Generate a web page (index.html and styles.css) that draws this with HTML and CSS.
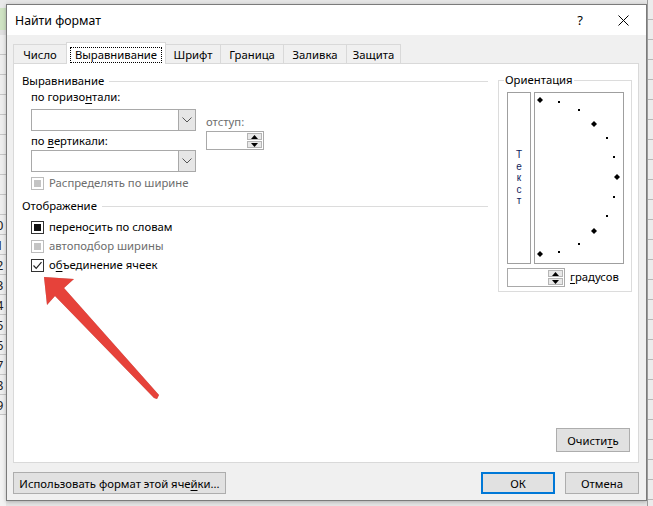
FILE: index.html
```html
<!DOCTYPE html>
<html lang="ru">
<head>
<meta charset="utf-8">
<title>Найти формат</title>
<link rel="stylesheet" href="styles.css">
</head>
<body>
<div class="screen">
  <div class="xl-left">
    <div class="xl-icon"></div>
    <div class="xl-rows">
      <div class="xl-row"></div><div class="xl-row"></div><div class="xl-row"></div><div class="xl-row"></div><div class="xl-row"></div><div class="xl-row"></div><div class="xl-row"></div><div class="xl-row"></div><div class="xl-row"></div><div class="xl-row">10</div><div class="xl-row">11</div><div class="xl-row">12</div><div class="xl-row">13</div><div class="xl-row">14</div><div class="xl-row">15</div><div class="xl-row">16</div><div class="xl-row">17</div><div class="xl-row">18</div><div class="xl-row">19</div>
    </div>
  </div>

  <div class="dialog">
    <div class="titlebar">
      <span class="title">Найти формат</span>
      <span class="help">?</span>
      <svg class="close" width="11" height="11" viewBox="0 0 11 11"><path d="M0.5 0.5 L10.5 10.5 M10.5 0.5 L0.5 10.5" stroke="#000" stroke-width="1" fill="none"/></svg>
    </div>

    <div class="dbody">
      <div class="tabs">
        <div class="tab t1">Число</div>
        <div class="tab sel"><span class="focus">Выравнивание</span></div>
        <div class="tab t3">Шрифт</div>
        <div class="tab t4">Граница</div>
        <div class="tab t5">Заливка</div>
        <div class="tab t6">Защита</div>
      </div>

      <div class="panel">
        <div class="panel-top">
          <div class="leftcol">
            <div class="sec-head"><span>Выравнивание</span><span class="line"></span></div>
            <div class="indent">
              <div class="align-grid">
                <div class="col-a">
                  <div class="lbl">по горизо<u>н</u>тали:</div>
                  <div class="combo"><span class="combo-field"></span><span class="combo-btn"><svg width="10" height="6" viewBox="0 0 10 6"><path d="M0.5 0.5 L5 5 L9.5 0.5" stroke="#555" fill="none"/></svg></span></div>
                  <div class="lbl lbl2">по <u>в</u>ертикали:</div>
                  <div class="combo combo2"><span class="combo-field"></span><span class="combo-btn"><svg width="10" height="6" viewBox="0 0 10 6"><path d="M0.5 0.5 L5 5 L9.5 0.5" stroke="#555" fill="none"/></svg></span></div>
                </div>
                <div class="col-b">
                  <div class="lbl dis">отступ:</div>
                  <div class="spin">
                    <span class="spin-field"></span>
                    <span class="spin-btns">
                      <span class="sb"><svg width="7" height="4" viewBox="0 0 7 4"><path d="M0 4 L3.5 0 L7 4 Z" fill="#000"/></svg></span>
                      <span class="sb"><svg width="7" height="4" viewBox="0 0 7 4"><path d="M0 0 L3.5 4 L7 0 Z" fill="#000"/></svg></span>
                    </span>
                  </div>
                </div>
              </div>
              <div class="cb-row first-cb dis"><span class="cb cb-dis"><span class="cb-fill"></span></span>Распределять по ширине</div>
            </div>

            <div class="sec-head sec2"><span>Отображение</span><span class="line"></span></div>
            <div class="indent">
              <div class="cb-row cb-a"><span class="cb cb-ind"><span class="cb-fill"></span></span>перено<u>с</u>ить по словам</div>
              <div class="cb-row dis"><span class="cb cb-dis"><span class="cb-fill"></span></span>автоподбор ширины</div>
              <div class="cb-row"><span class="cb cb-chk"><svg width="11" height="11" viewBox="0 0 11 11"><path d="M1.5 5.5 L4.2 8.3 L9.5 2.2" stroke="#222" stroke-width="1.2" fill="none"/></svg></span>о<u>б</u>ъединение ячеек</div>
            </div>
          </div>

          <fieldset class="orient">
            <legend>Ориентация</legend>
            <div class="orient-main">
              <div class="vtext"><span>Т</span><span>е</span><span>к</span><span>с</span><span>т</span></div>
              <div class="dial">
                <svg width="88" height="170" viewBox="0 0 88 170">
                  <g fill="#000">
                    <path d="M5 4 L8 7 L5 10 L2 7 Z"/>
                    <path d="M59 28 L62 31 L59 34 L56 31 Z"/>
                    <path d="M82 81 L85 84 L82 87 L79 84 Z"/>
                    <path d="M59 135 L62 138 L59 141 L56 138 Z"/>
                    <path d="M5 158 L8 161 L5 164 L2 161 Z"/>
                    <rect x="23" y="8" width="2" height="2"/>
                    <rect x="43" y="16" width="2" height="2"/>
                    <rect x="71" y="44" width="2" height="2"/>
                    <rect x="78" y="63" width="2" height="2"/>
                    <rect x="78" y="103" width="2" height="2"/>
                    <rect x="71" y="122" width="2" height="2"/>
                    <rect x="43" y="150" width="2" height="2"/>
                    <rect x="23" y="158" width="2" height="2"/>
                  </g>
                </svg>
              </div>
            </div>
            <div class="deg-row">
              <div class="spin spin-deg">
                <span class="spin-field"></span>
                <span class="spin-btns">
                  <span class="sb"><svg width="7" height="4" viewBox="0 0 7 4"><path d="M0 4 L3.5 0 L7 4 Z" fill="#000"/></svg></span>
                  <span class="sb"><svg width="7" height="4" viewBox="0 0 7 4"><path d="M0 0 L3.5 4 L7 0 Z" fill="#000"/></svg></span>
                </span>
              </div>
              <span class="deg-lbl"><u>г</u>радусов</span>
            </div>
          </fieldset>
        </div>

        <div class="panel-foot">
          <div class="btn btn-clear">Очисти<u>т</u>ь</div>
        </div>
      </div>

      <div class="dfoot">
        <div class="btn btn-use">Использовать формат этой яче<u>й</u>ки...</div>
        <div class="spacer"></div>
        <div class="btn btn-ok">ОК</div>
        <div class="btn btn-cancel">Отмена</div>
      </div>
    </div>
  </div>

  <div class="xl-right"></div>

  <svg class="arrow" width="653" height="506" viewBox="0 0 653 506">
    <polygon points="44,277 74,279 64,288 159,395 157,399 154,398 55,296 47,305" fill="#e6423a"/>
  </svg>
</div>
</body>
</html>
```

FILE: styles.css
```css
html, body {
  margin: 0;
  padding: 0;
}

body {
  width: 653px;
  height: 506px;
  overflow: hidden;
  background: #e6e6e6;
  font-family: "Noto Sans", "Open Sans", sans-serif;
  font-size: 11.3px;
  color: #000;
}

u {
  text-decoration: underline;
  text-underline-offset: 2px;
}

.screen {
  display: flex;
  height: 506px;
  position: relative;
}

/* Excel background strips */
.xl-left {
  width: 6px;
  flex: none;
  overflow: hidden;
  background: #f3f3f3;
  display: flex;
  flex-direction: column;
}

.xl-icon {
  height: 35px;
  flex: none;
  background: linear-gradient(#e9e9e9 0 8px, #cfe3c3 8px 30px, #e0e0e0 30px);
}

.xl-rows {
  margin-left: -14px;
  width: 20px;
}

.xl-row {
  height: 20px;
  box-sizing: border-box;
  border-bottom: 1px solid #c6c6c6;
  text-align: center;
  line-height: 20px;
  font-size: 13px;
  color: #222;
  background: #eeeeee;
}

.xl-right {
  flex: 1;
  background: repeating-linear-gradient(#ececec 0 19px, #b8b8b8 19px 20px);
  border-left: 1px solid #9a9a9a;
}

/* Dialog */
.dialog {
  width: 641px;
  height: 497px;
  margin-top: 4px;
  flex: none;
  box-sizing: border-box;
  border: 1px solid #7b7b7b;
  background: #f0f0f0;
  display: flex;
  flex-direction: column;
  box-shadow: 0 1px 4px rgba(0, 0, 0, 0.25);
}

.titlebar {
  height: 30px;
  flex: none;
  background: #fff;
  display: flex;
  align-items: center;
  padding-left: 8px;
  padding-right: 17px;
}

.title {
  flex: 1;
  font-size: 12.3px;
}

.help {
  font-size: 13px;
  margin-right: 35px;
}

.dbody {
  flex: 1;
  display: flex;
  flex-direction: column;
  padding: 7px 7px 6px 6px;
}

/* Tabs */
.tabs {
  display: flex;
  align-items: flex-end;
  height: 21px;
  position: relative;
  z-index: 1;
}

.tab {
  height: 19px;
  box-sizing: border-box;
  border: 1px solid #d9d9d9;
  border-bottom: none;
  margin-left: -1px;
  background: #f0f0f0;
  display: flex;
  align-items: center;
  justify-content: center;
  white-space: nowrap;
}

.tab:first-child {
  margin-left: 0;
}

.t1 { width: 54px; }
.t3 { width: 56px; }
.t4 { width: 64px; }
.t5 { width: 64px; }
.t6 { width: 55px; }

.tab.sel {
  width: 100px;
  height: 22px;
  margin-bottom: -1px;
  background: #fff;
  align-items: flex-start;
  padding-top: 5px;
}

.focus {
  outline: 1px dotted #000;
  outline-offset: 0;
  padding: 0 4px;
  line-height: 14px;
}

/* Panel */
.panel {
  height: 400px;
  flex: none;
  box-sizing: border-box;
  border: 1px solid #d9d9d9;
  background: #fff;
  display: flex;
  flex-direction: column;
}

.panel-top {
  display: flex;
  padding: 10px 6px 0 8px;
}

.leftcol {
  width: 466px;
  flex: none;
}

.sec-head {
  display: flex;
  align-items: center;
  height: 14px;
  line-height: 14px;
}

.sec-head .line {
  flex: 1;
  height: 1px;
  background: #dcdcdc;
  margin-left: 5px;
}

.sec2 {
  margin-top: 9px;
}

.indent {
  padding-left: 9px;
}

.align-grid {
  display: flex;
  margin-top: 2px;
}

.col-a {
  width: 165px;
}

.col-b {
  margin-left: 10px;
  padding-top: 25px;
}

.lbl {
  line-height: 14px;
  height: 14px;
  white-space: nowrap;
}

.lbl2 {
  margin-top: 3px;
}

.dis {
  color: #6d6d6d;
}

.combo {
  margin-top: 5px;
  height: 22px;
  box-sizing: border-box;
  border: 1px solid #a9a9a9;
  display: flex;
  background: #fff;
}

.combo2 {
  margin-top: 2px;
}

.combo-field {
  flex: 1;
}

.combo-btn {
  width: 16px;
  border-left: 1px solid #a9a9a9;
  background: #e6e6e6;
  display: flex;
  align-items: center;
  justify-content: center;
}

.spin {
  margin-top: 2px;
  width: 58px;
  height: 19px;
  box-sizing: border-box;
  border: 1px solid #a9a9a9;
  display: flex;
  background: #fff;
}

.spin-field {
  flex: 1;
}

.spin-btns {
  width: 15px;
  display: flex;
  flex-direction: column;
  padding: 1px 1px 1px 0;
  gap: 1px;
}

.sb {
  flex: 1;
  box-sizing: border-box;
  border: 1px solid #b5b5b5;
  background: #e8e8e8;
  display: flex;
  align-items: center;
  justify-content: center;
}

.cb-row {
  display: flex;
  align-items: center;
  height: 14px;
  line-height: 14px;
  margin-top: 5px;
  white-space: nowrap;
}

.first-cb {
  margin-top: 4px;
}

.cb-a {
  margin-top: 7px;
}

.cb {
  width: 13px;
  height: 13px;
  box-sizing: border-box;
  margin-right: 5px;
  display: flex;
  align-items: center;
  justify-content: center;
  background: #fff;
}

.cb-fill {
  width: 7px;
  height: 7px;
}

.cb-dis {
  border: 1px solid #bcbcbc;
}

.cb-dis .cb-fill {
  background: #c4c4c4;
}

.cb-ind {
  border: 1px solid #333;
}

.cb-ind .cb-fill {
  background: #111;
}

.cb-chk {
  border: 1px solid #333;
}

/* Orientation */
.orient {
  margin: -1px 0 0 10px;
  width: 134px;
  box-sizing: border-box;
  border: 1px solid #dcdcdc;
  padding: 5px 6px 4px 8px;
  min-width: 0;
}

.orient legend {
  padding: 0 1px;
  margin-left: -3px;
  line-height: 14px;
}

.orient-main {
  display: flex;
  gap: 3px;
}

.vtext {
  width: 24px;
  height: 172px;
  box-sizing: border-box;
  border: 1px solid #9f9f9f;
  display: flex;
  flex-direction: column;
  align-items: center;
  justify-content: center;
  color: #101c5c;
  font-family: "Liberation Sans", Arial, sans-serif;
  font-size: 10px;
  line-height: 11.5px;
}

.vtext span {
  display: block;
  height: 11.5px;
}

.dial {
  width: 90px;
  height: 172px;
  box-sizing: border-box;
  border: 1px solid #9f9f9f;
}

.dial svg {
  display: block;
}

.deg-row {
  display: flex;
  align-items: center;
  margin-top: 2px;
}

.spin-deg {
  margin-top: 2px;
}

.deg-lbl {
  margin-left: 5px;
  line-height: 14px;
}

/* Buttons */
.btn {
  height: 22px;
  box-sizing: border-box;
  border: 1px solid #adadad;
  background: #e1e1e1;
  display: flex;
  align-items: center;
  justify-content: center;
  white-space: nowrap;
}

.panel-foot {
  margin-top: auto;
  display: flex;
  justify-content: flex-end;
  padding: 0 8px 10px 0;
}

.btn-clear {
  width: 74px;
  height: 24px;
}

.dfoot {
  margin-top: 9px;
  display: flex;
}

.btn-use {
  width: 213px;
}

.spacer {
  flex: 1;
}

.btn-ok {
  width: 74px;
  border: 2px solid #0078d7;
}

.btn-cancel {
  width: 74px;
  margin-left: 10px;
}

.arrow {
  position: absolute;
  left: 0;
  top: 0;
  pointer-events: none;
  filter: drop-shadow(0.5px 0.5px 0.6px rgba(0, 0, 0, 0.3));
}
```
